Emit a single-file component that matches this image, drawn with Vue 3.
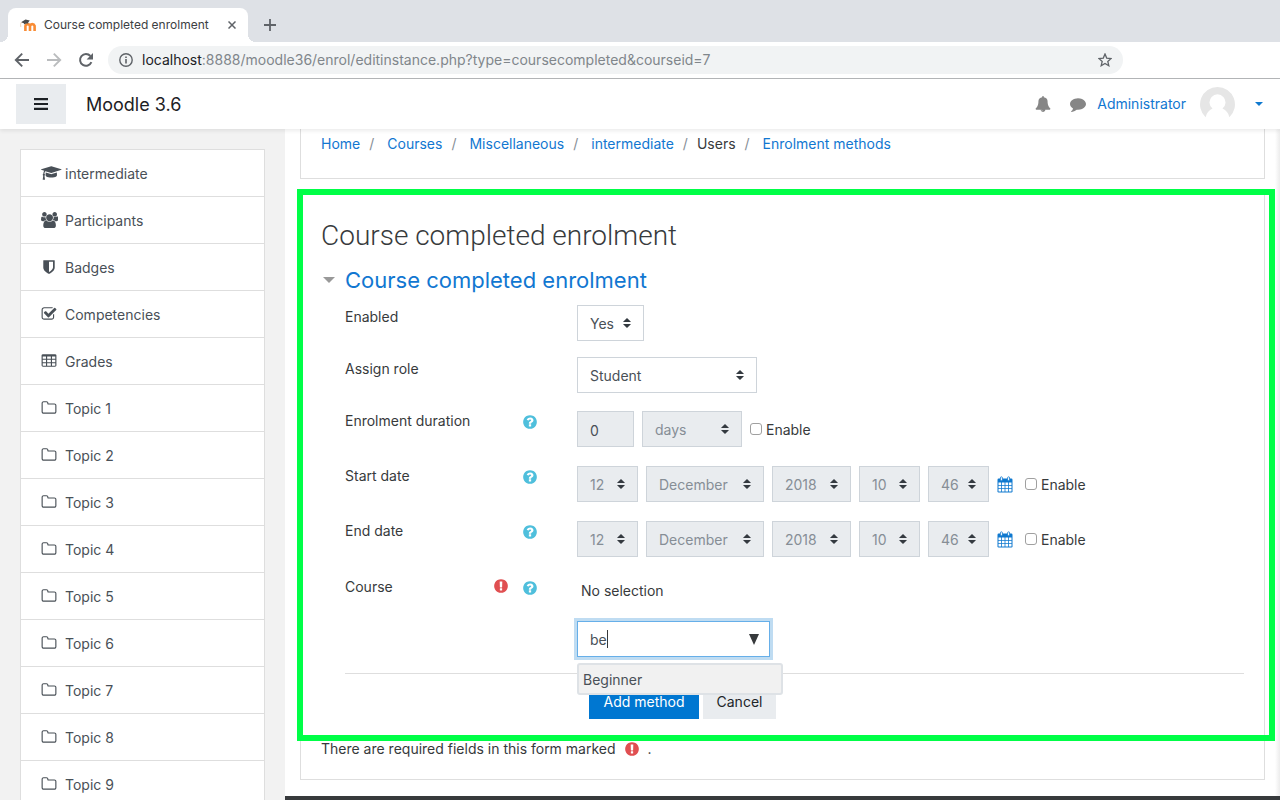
<script setup>
import { ref } from 'vue'

const icons = {
  cap: { w: 2304, d: 'M1774 836l18 316q4 69-82 128t-235 93.5-323 34.5-323-34.5-235-93.5-82-128l18-316 574 181q22 7 48 7t48-7zm530-324q0 23-22 31l-1120 352q-4 1-10 1t-10-1l-652-206q-43 34-71 111.5t-34 178.5q63 36 63 109 0 69-58 107l58 433q2 14-8 25-9 11-24 11h-192q-15 0-24-11-10-11-8-25l58-433q-58-38-58-107 0-73 65-111 11-207 98-330l-333-104q-22-8-22-31t22-31l1120-352q4-1 10-1t10 1l1120 352q22 8 22 31z' },
  users: { w: 1920, d: 'M593 896q-162 5-265 128h-134q-82 0-138-40.5t-56-118.5q0-353 124-353 6 0 43.5 21t97.5 42.5 119 21.5q67 0 133-23-5 37-5 66 0 159 93 287zm1071 637q0 120-73 189.5t-194 69.5h-874q-121 0-194-69.5t-73-189.5q0-53 3.5-103.5t14-109 26.5-108.5 43-97.5 62-81 85.5-53.5 111.5-20q10 0 43 21.5t73 48 107 48 135 21.5 135-21.5 107-48 73-48 43-21.5q61 0 111.5 20t85.5 53.5 62 81 43 97.5 26.5 108.5 14 109 3.5 103.5zm-1024-1277q0 106-75 181t-181 75-181-75-75-181 75-181 181-75 181 75 75 181zm704 384q0 159-112.5 271.5t-271.5 112.5-271.5-112.5-112.5-271.5 112.5-271.5 271.5-112.5 271.5 112.5 112.5 271.5zm576 225q0 78-56 118.5t-138 40.5h-134q-103-123-265-128 93-128 93-287 0-29-5-66 66 23 133 23 59 0 119-21.5t97.5-42.5 43.5-21q124 0 124 353zm-128-609q0 106-75 181t-181 75-181-75-75-181 75-181 181-75 181 75 75 181z' },
  shield: { w: 1792, d: 'M1344 960v-640h-448v1137q119-63 213-137 235-184 235-360zm192-768v768q0 86-33.5 170.5t-83 150-118 127.5-126.5 103-121 77.5-89.5 49.5-42.5 20q-12 6-26 6t-26-6q-16-7-42.5-20t-89.5-49.5-121-77.5-126.5-103-118-127.5-83-150-33.5-170.5v-768q0-26 19-45t45-19h1152q26 0 45 19t19 45z' },
  check: { w: 1792, d: 'M1472 930v318q0 119-84.5 203.5t-203.5 84.5h-832q-119 0-203.5-84.5t-84.5-203.5v-832q0-119 84.5-203.5t203.5-84.5h832q63 0 117 25 15 7 18 23 3 17-9 29l-49 49q-10 10-23 10-3 0-9-2-23-6-45-6h-832q-66 0-113 47t-47 113v832q0 66 47 113t113 47h832q66 0 113-47t47-113v-254q0-13 9-22l64-64q10-10 23-10 6 0 12 3 20 8 20 29zm231-489l-814 814q-24 24-57 24t-57-24l-430-430q-24-24-24-57t24-57l110-110q24-24 57-24t57 24l263 263 647-647q24-24 57-24t57 24l110 110q24 24 24 57t-24 57z' },
  table: { w: 1792, d: 'M224 128h1344q66 0 113 47t47 113v1088q0 66-47 113t-113 47H224q-66 0-113-47t-47-113V288q0-66 47-113t113-47zM192 384v272h368V384zm496 0v272h416V384zm544 0v272h368V384zM192 768v272h368V768zm496 0v272h416V768zm544 0v272h368V768zM192 1152v240q0 32 32 32h336v-272zm496 0v272h416v-272zm544 0v272h336q32 0 32-32v-240z' },
  folder: { w: 1792, d: 'M1600 1312v-704q0-40-28-68t-68-28h-704q-40 0-68-28t-28-68v-64q0-40-28-68t-68-28h-320q-40 0-68 28t-28 68v960q0 40 28 68t68 28h1216q40 0 68-28t28-68zm128-704v704q0 92-66 158t-158 66h-1216q-92 0-158-66t-66-158v-960q0-92 66-158t158-66h320q92 0 158 66t66 158v32h672q92 0 158 66t66 158z' },
}

const nav = [
  { icon: 'cap', text: 'intermediate' },
  { icon: 'users', text: 'Participants' },
  { icon: 'shield', text: 'Badges' },
  { icon: 'check', text: 'Competencies' },
  { icon: 'table', text: 'Grades' },
  ...Array.from({ length: 9 }, (_, i) => ({ icon: 'folder', text: `Topic ${i + 1}` })),
]

const crumbs = [
  { text: 'Home', link: true },
  { text: 'Courses', link: true },
  { text: 'Miscellaneous', link: true },
  { text: 'intermediate', link: true },
  { text: 'Users', link: false },
  { text: 'Enrolment methods', link: true },
]

const dateParts = [
  { name: 'day', value: '12', size: 'w-s' },
  { name: 'month', value: 'December', size: 'w-l' },
  { name: 'year', value: '2018', size: 'w-m' },
  { name: 'hour', value: '10', size: 'w-s' },
  { name: 'minute', value: '46', size: 'w-s' },
]
const dates = [
  { id: 'start', label: 'Start date' },
  { id: 'end', label: 'End date' },
]

const question = 'M1024 1376v-192q0-14-9-23t-23-9h-192q-14 0-23 9t-9 23v192q0 14 9 23t23 9h192q14 0 23-9t9-23zm256-672q0-88-55.5-163t-138.5-116-170-41q-243 0-371 213-15 24 8 42l132 100q7 6 19 6 16 0 25-12 53-68 86-92 34-24 86-24 48 0 85.5 26t37.5 59q0 38-20 61t-68 45q-63 28-115.5 86.5t-52.5 125.5v36q0 14 9 23t23 9h192q14 0 23-9t9-23q0-19 21.5-49.5t54.5-49.5q32-18 49-28.5t46-35 44.5-48 28-60.5 12.5-81zm384 192q0 209-103 385.5t-279.5 279.5-385.5 103-385.5-103-279.5-279.5-103-385.5 103-385.5 279.5-279.5 385.5-103 385.5 103 279.5 279.5 103 385.5z'
const exclamation = 'M896 128q209 0 385.5 103t279.5 279.5 103 385.5-103 385.5-279.5 279.5-385.5 103-385.5-103-279.5-279.5-103-385.5 103-385.5 279.5-279.5 385.5-103zm128 1247v-190q0-14-9-23.5t-22-9.5h-192q-13 0-23 10t-10 23v190q0 13 10 23t23 10h192q13 0 22-9.5t9-23.5zm-2-344l18-621q0-12-10-18-10-8-24-8h-220q-14 0-24 8-10 6-10 18l17 621q0 10 10 17.5t24 7.5h185q14 0 23.5-7.5t10.5-17.5z'
const sort = 'M4 0 7.6 3.4Q8.2 4 7.4 4H.6Q-.2 4 .4 3.4zM4 10 .4 6.6Q-.2 6 .6 6h6.8q.8 0 .2.6z'
const query = ref('be')
</script>

<template>
  <div class="window">
    <div class="tabs">
      <div class="tab">
        <svg class="favicon" viewBox="0 0 16 13" aria-hidden="true">
          <path d="M5.4 12V6.8a2.4 2.4 0 0 1 4.6 0V12M10 12V6.8a2.4 2.4 0 0 1 4.6 0V12" fill="none" stroke="#f98c35" stroke-width="2.6" />
          <path d="M1 3.2 5.5.6 9.8 1.4 8.2 3.6v1Q5.6 4 4.2 5.6L3.8 4.2z" fill="#4a4a4a" />
          <path d="M1.2 3.4Q.2 5 .8 8" fill="none" stroke="#f3c9a5" stroke-width=".8" />
        </svg>
        <span class="tab-title">Course completed enrolment</span>
        <button class="plain" type="button" aria-label="Close tab">
          <svg width="8" height="8" viewBox="0 0 8 8"><path d="M.5.5l7 7m0-7l-7 7" stroke="#5f6368" stroke-width="1.5" /></svg>
        </button>
      </div>
      <button class="plain new-tab" type="button" aria-label="New tab">
        <svg width="12" height="12" viewBox="0 0 12 12"><path d="M6 0v12M0 6h12" stroke="#5f6368" stroke-width="1.8" /></svg>
      </button>
    </div>

    <div class="toolbar">
      <button class="plain" type="button" aria-label="Back">
        <svg width="16" height="16" viewBox="0 0 16 16" fill="none" stroke="#5f6368" stroke-width="1.9"><path d="M15 8H2M8.2 1.6 1.8 8l6.4 6.4" /></svg>
      </button>
      <button class="plain" type="button" aria-label="Forward">
        <svg width="16" height="16" viewBox="0 0 16 16" fill="none" stroke="#babcbe" stroke-width="1.9"><path d="M1 8h13M7.8 1.6 14.2 8l-6.4 6.4" /></svg>
      </button>
      <button class="plain" type="button" aria-label="Reload">
        <svg width="16" height="16" viewBox="0 0 16 16"><path d="M13.4 10.2A5.9 5.9 0 1 1 12.4 4" fill="none" stroke="#5f6368" stroke-width="2" /><path d="M15 1v6.4H8.6z" fill="#5f6368" /></svg>
      </button>
      <div class="address">
        <svg width="14" height="14" viewBox="0 0 14 14"><circle cx="7" cy="7" r="6.2" fill="none" stroke="#5f6368" stroke-width="1.4" /><path d="M7 6v4.4M7 3.4v1.5" stroke="#5f6368" stroke-width="1.6" /></svg>
        <span class="url"><b>localhost</b>:8888/moodle36/enrol/editinstance.php?type=coursecompleted&amp;courseid=7</span>
        <svg width="14" height="14" viewBox="0 0 14 14"><path d="M7 1l1.7 4.1 4.4.4-3.3 2.9 1 4.3L7 10.4l-3.8 2.3 1-4.3L.9 5.5l4.4-.4z" fill="none" stroke="#5f6368" stroke-width="1.3" /></svg>
      </div>
    </div>

    <header class="topbar">
      <button class="menu" type="button" aria-label="Toggle side panel">
        <svg width="14" height="12" viewBox="0 0 14 12"><path d="M0 1.2h14M0 6h14M0 10.8h14" stroke="#1d2125" stroke-width="2.2" /></svg>
      </button>
      <a class="brand" href="#">Moodle 3.6</a>
      <div class="tools">
        <button class="plain" type="button" aria-label="Notifications">
          <svg width="16" height="16" viewBox="0 0 1792 1792" fill="#868686"><path d="M912 1696q0-16-16-16-59 0-101.5-42.5t-42.5-101.5q0-16-16-16t-16 16q0 73 51.5 124.5t124.5 51.5q16 0 16-16zm816-288q0 52-38 90t-90 38h-448q0 106-75 181t-181 75-181-75-75-181h-448q-52 0-90-38t-38-90q50-42 91-88t85-119.5 74.5-158.5 50-206 19.5-260q0-152 117-282.5t307-158.5q-8-19-8-39 0-40 28-68t68-28 68 28 28 68q0 20-8 39 190 28 307 158.5t117 282.5q0 139 19.5 260t50 206 74.5 158.5 85 119.5 91 88z" /></svg>
        </button>
        <button class="plain" type="button" aria-label="Messages">
          <svg width="16" height="16" viewBox="0 0 1792 1792" fill="#868686"><path d="M1792 896q0 174-120 321.5t-326 233-450 85.5q-70 0-145-8-198 175-460 242-49 14-114 22-17 2-30.5-9t-17.5-29v-1q-3-4-.5-12t2-10 4.5-9.5l6-9 7-8.5 8-9q7-8 31-34.5t34.5-38 31-39.5 32.5-51 27-59 26-76q-157-89-247.5-220t-90.5-281q0-130 71-248.5t191-204.5 286-136.5 348-50.5q244 0 450 85.5t326 233 120 321.5z" /></svg>
        </button>
        <a class="user" href="#">
          <span>Administrator</span>
          <svg class="avatar" width="35" height="35" viewBox="0 0 35 35"><path d="M17.5 0A17.5 17.5 0 0 1 29.4 30.3Q28 24 22.5 21.6a8 8 0 1 0-10 0Q7 24 5.6 30.3A17.5 17.5 0 0 1 17.5 0z" fill="#e6e6e6" /></svg>
          <svg class="caret" width="8" height="4" viewBox="0 0 8 4"><path d="M0 0h8L4 4z" fill="#0f79cf" /></svg>
        </a>
      </div>
    </header>

    <div class="page">
      <nav class="drawer" aria-label="Course">
        <ul>
          <li v-for="n in nav" :key="n.text">
            <a href="#">
              <span class="nav-icon"><svg height="16" :viewBox="`0 0 ${icons[n.icon].w} 1792`" fill="currentColor"><path :d="icons[n.icon].d" fill-rule="evenodd" /></svg></span>
              {{ n.text }}
            </a>
          </li>
        </ul>
      </nav>

      <div class="content">
        <main>
          <ol class="crumbs">
            <li v-for="c in crumbs" :key="c.text">
              <a v-if="c.link" href="#">{{ c.text }}</a>
              <span v-else>{{ c.text }}</span>
            </li>
          </ol>

          <section class="card">
            <h2>Course completed enrolment</h2>
            <form @submit.prevent>
              <fieldset>
                <legend>
                  <svg width="12" height="6" viewBox="0 0 12 6"><path d="M0 0h12L6 6z" fill="#999" /></svg>
                  <a href="#">Course completed enrolment</a>
                </legend>

                <div class="row">
                  <div class="label"><label for="enabled">Enabled</label></div>
                  <div class="fields">
                    <span class="pick w-yes"><select id="enabled"><option>Yes</option><option>No</option></select><svg class="sort" viewBox="0 0 8 10"><path :d="sort" /></svg></span>
                  </div>
                </div>

                <div class="row">
                  <div class="label"><label for="role">Assign role</label></div>
                  <div class="fields">
                    <span class="pick w-role"><select id="role"><option>Student</option></select><svg class="sort" viewBox="0 0 8 10"><path :d="sort" /></svg></span>
                  </div>
                </div>

                <div class="row timed">
                  <div class="label">
                    <label for="duration">Enrolment duration</label>
                    <button class="plain help" type="button" aria-label="Help with enrolment duration"><svg width="16" height="16" viewBox="0 0 1792 1792"><path :d="question" /></svg></button>
                  </div>
                  <div class="fields">
                    <input id="duration" class="text w-num" type="text" value="0" disabled />
                    <span class="pick w-unit"><select aria-label="Time unit" disabled><option>days</option></select><svg class="sort" viewBox="0 0 8 10"><path :d="sort" /></svg></span>
                    <label class="tick"><input type="checkbox" /><span>Enable</span></label>
                  </div>
                </div>

                <div v-for="d in dates" :key="d.id" class="row timed">
                  <div class="label">
                    <label :for="`${d.id}-day`">{{ d.label }}</label>
                    <button class="plain help" type="button" :aria-label="`Help with ${d.label}`"><svg width="16" height="16" viewBox="0 0 1792 1792"><path :d="question" /></svg></button>
                  </div>
                  <div class="fields">
                    <span v-for="p in dateParts" :key="p.name" class="pick" :class="p.size">
                      <select :id="`${d.id}-${p.name}`" :aria-label="p.name" disabled><option>{{ p.value }}</option></select><svg class="sort" viewBox="0 0 8 10"><path :d="sort" /></svg>
                    </span>
                    <button class="plain" type="button" aria-label="Calendar">
                      <svg width="16" height="17" viewBox="0 0 16 17">
                        <rect x=".5" y="2.5" width="15" height="14" rx="1.2" fill="#0f79cf" />
                        <path d="M1.5 6.5H4V9H1.5zM4.8 6.5h2.8V9H4.8zM8.4 6.5h2.8V9H8.4zM12 6.5h2.5V9H12zM1.5 9.8H4v2.5H1.5zM4.8 9.8h2.8v2.5H4.8zM8.4 9.8h2.8v2.5H8.4zM12 9.8h2.5v2.5H12zM1.5 13.1H4v2.4H1.5zM4.8 13.1h2.8v2.4H4.8zM8.4 13.1h2.8v2.4H8.4zM12 13.1h2.5v2.4H12z" fill="#fff" />
                        <rect x="3.4" y=".8" width="2" height="4" rx="1" fill="#fff" stroke="#0f79cf" stroke-width=".8" />
                        <rect x="10.6" y=".8" width="2" height="4" rx="1" fill="#fff" stroke="#0f79cf" stroke-width=".8" />
                      </svg>
                    </button>
                    <label class="tick after-icon"><input type="checkbox" /><span>Enable</span></label>
                  </div>
                </div>

                <div class="row course">
                  <div class="label">
                    <label for="course">Course</label>
                    <svg class="required" width="16" height="16" viewBox="0 0 1792 1792" role="img" aria-label="Required"><path :d="exclamation" /></svg>
                    <button class="plain help" type="button" aria-label="Help with course"><svg width="16" height="16" viewBox="0 0 1792 1792"><path :d="question" /></svg></button>
                  </div>
                  <div class="chooser">
                    <div class="none">No selection</div>
                    <div class="combo">
                      <input id="course" v-model="query" class="text" type="text" autocomplete="off" />
                      <span class="cursor"><span class="typed">{{ query }}</span></span>
                      <svg class="open" width="10" height="11" viewBox="0 0 10 11"><path d="M0 0h10L5 11z" fill="#373a3c" /></svg>
                      <ul class="suggest"><li>Beginner</li></ul>
                    </div>
                  </div>
                </div>
              </fieldset>

              <div class="actions">
                <button class="primary" type="submit">Add method</button>
                <button class="secondary" type="button">Cancel</button>
              </div>
            </form>
            <p class="note">There are required fields in this form marked <svg class="required" width="16" height="16" viewBox="0 0 1792 1792" role="img" aria-label="Required"><path :d="exclamation" /></svg><span>.</span></p>
            <div class="highlight"></div>
          </section>
        </main>
        <footer></footer>
      </div>
    </div>
  </div>
</template>

<style>
body {
  background: #fff;
}
</style>

<style scoped>
* {
  box-sizing: border-box;
}
.window {
  display: flex;
  flex-direction: column;
  height: 100vh;
  overflow: hidden;
  background: #fff;
  color: #373a3c;
  font: 14px/22px Inter, "Liberation Sans", sans-serif;
}
svg {
  display: block;
  flex: none;
}
a {
  color: #1177d1;
  text-decoration: none;
}
ul,
ol {
  margin: 0;
  padding: 0;
  list-style: none;
}
input,
select,
button {
  font: inherit;
}
.plain {
  display: flex;
  flex: none;
  padding: 0;
  border: 0;
  background: none;
}

.tabs {
  display: flex;
  flex: none;
  align-items: center;
  gap: 16px;
  height: 42px;
  padding: 8px 8px 0;
  background: #dee1e6;
}
.tab {
  position: relative;
  display: flex;
  align-items: center;
  width: 240px;
  height: 34px;
  padding: 0 12px;
  border-radius: 8px 8px 0 0;
  background: #fff;
}
.tab::before,
.tab::after {
  content: "";
  position: absolute;
  bottom: 0;
  width: 8px;
  height: 8px;
}
.tab::before {
  left: -8px;
  background: radial-gradient(circle at 0 0, #dee1e6 8px, #fff 8px);
}
.tab::after {
  right: -8px;
  background: radial-gradient(circle at 100% 0, #dee1e6 8px, #fff 8px);
}
.favicon {
  width: 16px;
  height: 13px;
  margin-right: 8px;
}
.tab-title {
  flex: 1;
  color: #3c4043;
  font-size: 12px;
  white-space: nowrap;
}

.toolbar {
  display: flex;
  flex: none;
  align-items: center;
  gap: 16px;
  height: 37px;
  padding: 0 157px 0 14px;
  border-bottom: 1px solid #b4b6b8;
}
.address {
  display: flex;
  flex: 1;
  align-items: center;
  gap: 9px;
  min-width: 0;
  height: 28px;
  margin-left: -2px;
  padding: 0 11px;
  border-radius: 14px;
  background: #f1f3f4;
}
.url {
  flex: 1;
  overflow: hidden;
  color: #80868b;
  white-space: nowrap;
}
.url b {
  color: #202124;
  font-weight: 400;
}

.topbar {
  position: relative;
  z-index: 2;
  display: flex;
  flex: none;
  align-items: center;
  height: 50px;
  padding: 0 17px 0 16px;
  background: #fff;
  box-shadow: 0 2px 4px rgba(0, 0, 0, 0.08);
}
.menu {
  display: grid;
  place-items: center;
  width: 50px;
  height: 40px;
  border: 0;
  background: #e9ecef;
}
.brand {
  margin-left: 20px;
  padding-top: 2px;
  color: #1d2125;
  font-size: 18px;
}
.tools {
  display: flex;
  align-items: center;
  gap: 19px;
  margin-left: auto;
}
.user {
  display: flex;
  align-items: center;
  margin-left: -8px;
}
.avatar {
  margin: 0 20px 0 14px;
}

.page {
  display: flex;
  flex: 1;
  min-height: 0;
}
.drawer {
  flex: 0 0 285px;
  padding: 20px;
  background: #f2f2f2;
}
.drawer ul {
  border: 1px solid #dedede;
  background: #fff;
}
.drawer li + li {
  border-top: 1px solid #dedede;
}
.drawer a {
  display: flex;
  align-items: center;
  height: 46px;
  padding: 2px 20px 0;
  color: #495057;
}
.nav-icon {
  width: 24px;
  margin-top: -3px;
}

.content {
  flex: 1;
  min-width: 0;
}
main {
  padding: 0 15px 16px;
  background: linear-gradient(to left, #ececec, #fff 5px);
}
.crumbs {
  display: flex;
  padding: 4px 20px 23px;
  border: 1px solid #dedede;
  border-top: 0;
  background: #fff;
}
.crumbs li + li::before {
  content: "/";
  padding: 0 13px 0 9px;
  color: #868e96;
}
.crumbs li:nth-child(5)::before {
  padding-right: 9px;
}

.card {
  position: relative;
  margin-top: 15px;
  padding: 22px 20px 19px;
  border: 1px solid #dedede;
  background: #fff;
}
.highlight {
  position: absolute;
  inset: -6px -11px 38px -4px;
  border: 6px solid #00ff47;
  pointer-events: none;
}
h2 {
  margin: 0;
  font-family: Roboto, "Liberation Sans", sans-serif;
  font-size: 28px;
  font-weight: 300;
  line-height: 38px;
}
fieldset {
  margin: 12px 0 0;
  padding: 0 0 0 24px;
  border: 0;
}
legend {
  display: flex;
  align-items: center;
  gap: 10px;
  margin: 0 0 12px -22px;
  padding: 0;
  font-size: 22px;
  line-height: 26px;
}
.row {
  display: flex;
  margin-bottom: 16px;
}
.timed {
  margin-bottom: 17px;
}
.timed .fields {
  padding-top: 2px;
}
.label {
  display: flex;
  flex: 0 0 232px;
  align-items: flex-start;
  justify-content: flex-end;
  padding: 1px 39px 0 0;
}
.label label {
  margin-right: auto;
}
.help {
  margin-top: 4px;
  fill: #4fbfdc;
}
.required {
  fill: #e04f51;
}
.fields {
  display: flex;
  align-items: center;
  gap: 8px;
}
.pick {
  position: relative;
  display: block;
}
select,
.text {
  width: 100%;
  height: 36px;
  padding: 2px 12px 0;
  border: 1px solid #ced4da;
  border-radius: 0;
  outline: 0;
  background: #fff;
  color: #495057;
  appearance: none;
}
select:disabled,
.text:disabled {
  background: #e9ecef;
  opacity: 1;
}
select:disabled {
  color: #868e96;
}
.sort {
  position: absolute;
  top: 13px;
  right: 13px;
  width: 8px;
  height: 10px;
  fill: #343a40;
  pointer-events: none;
}
.w-yes {
  width: 67px;
}
.w-role {
  width: 180px;
}
.w-num {
  width: 57px;
}
.w-unit {
  width: 100px;
}
.w-s {
  width: 61px;
}
.w-m {
  width: 79px;
}
.w-l {
  width: 118px;
}
.tick {
  display: flex;
  align-items: center;
  gap: 4px;
}
.tick span {
  padding-top: 2px;
}
.tick input {
  width: 12px;
  height: 12px;
  margin: 0;
  border: 1px solid #a0a0a0;
  border-radius: 3px;
  background: #fff;
  appearance: none;
}
.tick input:checked {
  background: #1177d1;
}
.after-icon {
  margin-left: 4px;
}
.course .label {
  gap: 13px;
  padding-top: 2px;
}
.course .required {
  margin-top: 2px;
}
.none {
  padding: 6px 4px 19px;
}
.combo {
  position: relative;
  width: 193px;
}
.combo .text {
  display: block;
  padding-top: 0;
  border-color: #66afe9;
  box-shadow: 0 0 0 3px #bfdcf2;
  caret-color: transparent;
}
.cursor {
  position: absolute;
  top: 9px;
  left: 13px;
  height: 18px;
  border-right: 1px solid #373a3c;
  pointer-events: none;
}
.typed {
  visibility: hidden;
}
.open {
  position: absolute;
  top: 13px;
  right: 11px;
  pointer-events: none;
}
.suggest {
  position: absolute;
  z-index: 1;
  top: 42px;
  left: 0;
  width: 206px;
  padding: 5px 4px 3px;
  border: 2px solid #dee2e6;
  border-radius: 3px;
  background: #f1f1f1;
  color: #495057;
}
.suggest li {
  line-height: 20px;
}
.actions {
  display: flex;
  gap: 4px;
  margin-left: 24px;
  padding: 9px 0 0 244px;
  border-top: 1px solid #dedede;
}
.actions button {
  height: 36px;
  padding: 2px 12px 0;
  border: 0;
}
.primary {
  width: 110px;
  background: #0077d1;
  color: #fff;
}
.secondary {
  width: 73px;
  background: #e9ecef;
  color: #212529;
}
.note {
  display: flex;
  align-items: center;
  gap: 8px;
  margin: 19px 0 0;
}
footer {
  height: 200px;
  background: #373a3c;
}
</style>
